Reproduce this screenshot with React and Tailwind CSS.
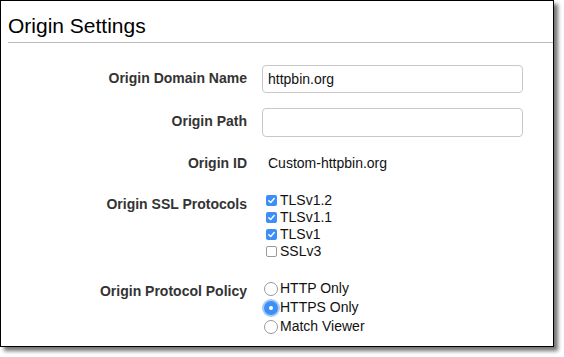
const font = { fontFamily: '"Liberation Sans", Arial, Helvetica, sans-serif' };

const Label = ({ children, className = "" }) => (
  <div className={`w-[246px] shrink-0 text-right text-[14px] font-bold leading-[20px] text-[#333] ${className}`}>
    {children}
  </div>
);

const Checkbox = ({ checked, label }) => (
  <div className="flex h-[17px] items-center">
    {checked ? (
      <span className="ml-[4px] flex h-[11px] w-[11px] items-center justify-center rounded-[2px] bg-[#3d8ff5]">
        <svg width="9" height="9" viewBox="0 0 10 10">
          <path d="M2 5.2 L4.1 7.2 L8 2.8" fill="none" stroke="#fff" strokeWidth="1.6" strokeLinecap="round" strokeLinejoin="round" />
        </svg>
      </span>
    ) : (
      <span className="ml-[4px] h-[11px] w-[11px] rounded-[2px] border border-[#9a9a9a] bg-white" />
    )}
    <span className="ml-[3px] text-[14px] leading-[17px] text-[#111]">{label}</span>
  </div>
);

const Radio = ({ checked, label }) => (
  <div className="flex h-[19px] items-center">
    {checked ? (
      <span className="ml-[2px] flex h-[14px] w-[14px] items-center justify-center rounded-full bg-[#3d8ff5] shadow-[0_0_0_2px_rgba(90,160,245,0.55)]">
        <span className="h-[4px] w-[4px] rounded-full bg-white" />
      </span>
    ) : (
      <span className="ml-[2px] h-[14px] w-[14px] rounded-full border border-[#9a9a9a] bg-white" />
    )}
    <span className="ml-[2px] text-[14px] leading-[19px] text-[#111]">{label}</span>
  </div>
);

export default function App() {
  return (
    <div className="h-[357px] w-[564px] bg-white" style={font}>
      <div className="h-[347px] w-[554px] border border-black bg-white shadow-[4px_4px_4px_rgba(0,0,0,0.55)]">
        <div className="ml-[7px] border-b border-[#bbbbbb] pb-[4px] pt-[13px] text-[21px] leading-[24px] text-black">
          Origin Settings
        </div>

        <div className="mt-[22px] flex items-start">
          <Label className="pt-[3px]">Origin Domain Name</Label>
          <div className="ml-[15px] flex h-[28px] w-[261px] items-center rounded-[4px] border border-[#c8c8c8] pl-[5px] text-[14px] text-[#111]">
            httpbin.org
          </div>
        </div>

        <div className="mt-[15px] flex items-start">
          <Label className="pt-[3px]">Origin Path</Label>
          <div className="ml-[15px] h-[29px] w-[261px] rounded-[4px] border border-[#c8c8c8]" />
        </div>

        <div className="mt-[16px] flex items-start">
          <Label>Origin ID</Label>
          <div className="ml-[21px] text-[14px] leading-[20px] text-[#111]">Custom-httpbin.org</div>
        </div>

        <div className="mt-[19px] flex items-start">
          <Label className="pt-[2px]">Origin SSL Protocols</Label>
          <div className="ml-[15px] flex flex-col">
            <Checkbox checked label="TLSv1.2" />
            <Checkbox checked label="TLSv1.1" />
            <Checkbox checked label="TLSv1" />
            <Checkbox label="SSLv3" />
          </div>
        </div>

        <div className="mt-[19px] flex items-start">
          <Label className="pt-[2px]">Origin Protocol Policy</Label>
          <div className="ml-[15px] flex flex-col">
            <Radio label="HTTP Only" />
            <Radio checked label="HTTPS Only" />
            <Radio label="Match Viewer" />
          </div>
        </div>
      </div>
    </div>
  );
}
